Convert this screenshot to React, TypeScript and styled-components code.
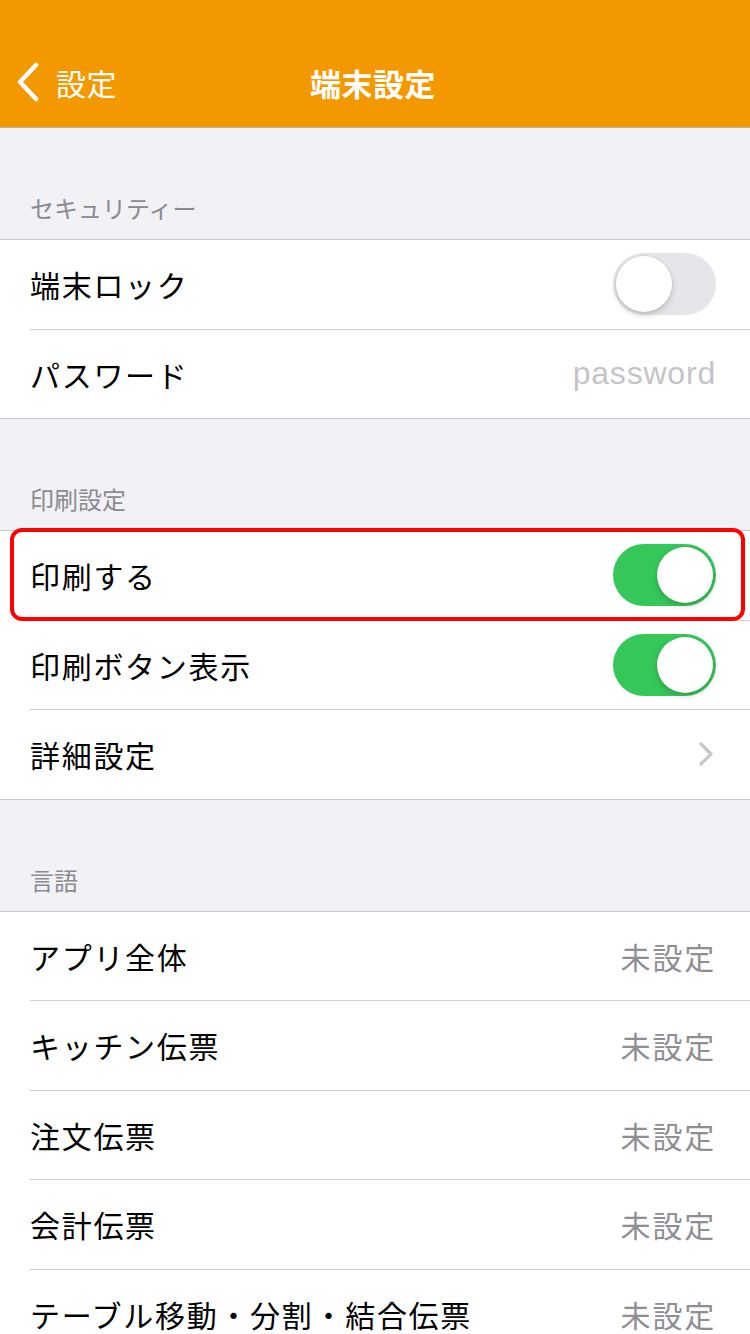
import React from 'react';
import styled, { createGlobalStyle } from 'styled-components';

const GlobalStyle = createGlobalStyle`
  html, body {
    margin: 0;
    padding: 0;
    background: #f1f1f6;
    font-family: "Noto Sans CJK JP", "Noto Sans", "Liberation Sans", sans-serif;
    -webkit-font-smoothing: antialiased;
  }
`;

const Page = styled.div`
  width: 750px;
  min-height: 1334px;
  background: #f1f1f6;
  overflow: hidden;
`;

const NavBar = styled.header`
  height: 127px;
  background: #f49800;
  border-bottom: 1px solid #b3b3b3;
  box-sizing: content-box;
  display: grid;
  grid-template-columns: 1fr auto 1fr;
  align-items: end;
`;

const NavInner = styled.div`
  height: 84px;
  padding-bottom: 3px;
  display: flex;
  align-items: center;
`;

const BackButton = styled(NavInner)`
  padding-left: 15px;
  gap: 15px;
  color: #fff;
  font-size: 30px;
  letter-spacing: 0.5px;
`;

const Title = styled(NavInner)`
  color: #fff;
  font-size: 31px;
  font-weight: 700;
  letter-spacing: 0.5px;
  margin-left: -4px;
`;

const SectionHeader = styled.div`
  height: 111px;
  box-sizing: border-box;
  padding: 0 30px 19px;
  display: flex;
  align-items: flex-end;
  color: #8a8a8f;
  font-size: 24px;
  line-height: 1;
`;

const Group = styled.div`
  position: relative;
  background: #fff;
  border-top: 1px solid #c8c7cc;
  border-bottom: 1px solid #c8c7cc;
`;

const Row = styled.div<{ $last?: boolean }>`
  margin-left: 30px;
  height: 88.5px;
  padding-right: 34px;
  display: flex;
  align-items: center;
  justify-content: space-between;
  border-bottom: ${({ $last }) => ($last ? 'none' : '1px solid #d0d0d4')};
`;

const Label = styled.span`
  font-size: 30px;
  color: #000;
  letter-spacing: 1.7px;
`;

const Value = styled.span<{ $placeholder?: boolean }>`
  font-size: ${({ $placeholder }) => ($placeholder ? '32px' : '30px')};
  color: ${({ $placeholder }) => ($placeholder ? '#c4c4c8' : '#8e8e93')};
  font-family: ${({ $placeholder }) =>
    $placeholder ? '"Liberation Sans", sans-serif' : 'inherit'};
  letter-spacing: ${({ $placeholder }) => ($placeholder ? '0.8px' : '1.8px')};
`;

const Track = styled.div<{ $on: boolean }>`
  position: relative;
  width: 103px;
  height: 62px;
  border-radius: 31px;
  background: ${({ $on }) => ($on ? '#35c759' : '#e6e6ea')};
`;

const Knob = styled.div<{ $on: boolean }>`
  position: absolute;
  top: 3px;
  left: ${({ $on }) => ($on ? '44px' : '3px')};
  width: 56px;
  height: 56px;
  border-radius: 50%;
  background: #fff;
  box-shadow: 0 3px 6px rgba(0, 0, 0, 0.18), 0 0 0 1px rgba(0, 0, 0, 0.04);
`;

const Highlight = styled.div`
  position: absolute;
  left: 10px;
  right: 5px;
  top: -3px;
  height: 93px;
  border: 4px solid #ff0000;
  border-radius: 12px;
  box-sizing: border-box;
  pointer-events: none;
`;

const Switch = ({ on }: { on: boolean }) => (
  <Track $on={on}>
    <Knob $on={on} />
  </Track>
);

const Chevron = () => (
  <svg width="16" height="26" viewBox="0 0 16 26" style={{ marginRight: 2 }}>
    <path d="M3 3 L13 13 L3 23" fill="none" stroke="#c7c7cc" strokeWidth="3.2" strokeLinecap="round" strokeLinejoin="round" />
  </svg>
);

const BackChevron = () => (
  <svg width="26" height="40" viewBox="0 0 26 40">
    <path d="M21 3 L5 20 L21 37" fill="none" stroke="#fff" strokeWidth="4.5" strokeLinecap="round" strokeLinejoin="round" />
  </svg>
);

type Item = { label: string; switchOn?: boolean; value?: string; placeholder?: boolean; chevron?: boolean };

const languages: Item[] = [
  { label: 'アプリ全体', value: '未設定' },
  { label: 'キッチン伝票', value: '未設定' },
  { label: '注文伝票', value: '未設定' },
  { label: '会計伝票', value: '未設定' },
  { label: 'テーブル移動・分割・結合伝票', value: '未設定' },
];

const renderRow = (item: Item, last: boolean) => (
  <Row key={item.label} $last={last}>
    <Label>{item.label}</Label>
    {item.switchOn !== undefined && <Switch on={item.switchOn} />}
    {item.value && <Value $placeholder={item.placeholder}>{item.value}</Value>}
    {item.chevron && <Chevron />}
  </Row>
);

export default function App() {
  const security: Item[] = [
    { label: '端末ロック', switchOn: false },
    { label: 'パスワード', value: 'password', placeholder: true },
  ];
  const print: Item[] = [
    { label: '印刷する', switchOn: true },
    { label: '印刷ボタン表示', switchOn: true },
    { label: '詳細設定', chevron: true },
  ];

  return (
    <Page>
      <GlobalStyle />
      <NavBar>
        <BackButton>
          <BackChevron />
          <span>設定</span>
        </BackButton>
        <Title>端末設定</Title>
        <div />
      </NavBar>

      <SectionHeader>セキュリティー</SectionHeader>
      <Group>{security.map((it, i) => renderRow(it, i === security.length - 1))}</Group>

      <SectionHeader>印刷設定</SectionHeader>
      <Group>
        {print.map((it, i) => renderRow(it, i === print.length - 1))}
        <Highlight />
      </Group>

      <SectionHeader>言語</SectionHeader>
      <Group>{languages.map((it, i) => renderRow(it, i === languages.length - 1))}</Group>
    </Page>
  );
}
